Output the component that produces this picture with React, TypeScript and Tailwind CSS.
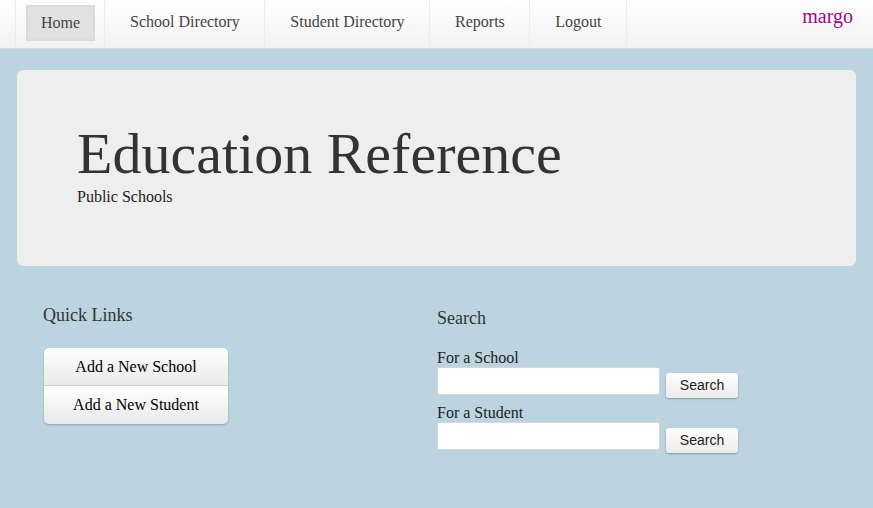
export default function App() {
  const nav = ["Home", "School Directory", "Student Directory", "Reports", "Logout"];
  return (
    <div className="min-h-[508px] bg-[#bbd4df] font-['Liberation_Serif',serif] text-[#333]">
      <div className="flex h-[49px] items-start justify-between border-b border-[#d6d6d6] bg-gradient-to-b from-white to-[#f2f2f2] pl-[15px] pr-[20px]">
        <ul className="flex h-[48px] border-l border-[#ececec]">
          {nav.map((item, i) => (
            <li key={item} className="flex h-[48px] border-r border-[#ececec]">
              {i === 0 ? (
                <a className="my-[5px] ml-[10px] mr-[9px] flex h-[36px] items-center bg-[#e1e1e1] px-[15px] text-[16px] text-[#444] shadow-[inset_0_0_4px_rgba(0,0,0,0.08)]">
                  {item}
                </a>
              ) : (
                <a className="flex h-[44px] items-center pl-[25px] pr-[24.5px] text-[16px] text-[#444]">{item}</a>
              )}
            </li>
          ))}
        </ul>
        <span className="pt-[1px] text-[20px] text-[#a3058f]">margo</span>
      </div>

      <div className="px-[17px] pt-[21px]">
        <div className="flex h-[196px] flex-col rounded-[6px] bg-[#eeeeee] px-[60px] pt-[50px]">
          <h1 className="text-[58px] leading-[68px] text-[#333]">Education Reference</h1>
          <p className="text-[16px] leading-[18px] text-[#222]">Public Schools</p>
        </div>
      </div>

      <div className="flex pt-[39px]">
        <div className="w-[420px] pl-[43px]">
          <h2 className="text-[18px] leading-[20px] text-[#333]">Quick Links</h2>
          <div className="ml-[1px] mt-[23px] flex w-[184px] flex-col rounded-[5px] shadow-[0_1px_2px_rgba(0,0,0,0.25)]">
            <button className="h-[38px] rounded-t-[5px] border-b border-[#cfcfcf] bg-gradient-to-b from-white to-[#e9e9e9] text-[16px] text-black">
              Add a New School
            </button>
            <button className="h-[38px] rounded-b-[5px] bg-gradient-to-b from-white to-[#e9e9e9] text-[16px] text-black">
              Add a New Student
            </button>
          </div>
        </div>
        <div className="pl-[17px] pt-[3px]">
          <h2 className="text-[18px] leading-[20px] text-[#333]">Search</h2>
          <div className="mt-[21px] flex flex-col">
            <label className="text-[16px] leading-[18px] text-[#222]">For a School</label>
            <div className="flex items-end gap-[6px]">
              <input className="h-[28px] w-[223px] rounded-[2px] border border-[#d6d6d6] bg-white" />
              <button className="mb-[-3px] h-[25px] w-[72px] rounded-[3px] bg-gradient-to-b from-white to-[#ebebeb] font-['Liberation_Sans',sans-serif] text-[14px] text-[#222] shadow-[0_1px_2px_rgba(0,0,0,0.3)]">
                Search
              </button>
            </div>
            <label className="mt-[9px] text-[16px] leading-[18px] text-[#222]">For a Student</label>
            <div className="flex items-end gap-[6px]">
              <input className="h-[28px] w-[223px] rounded-[2px] border border-[#d6d6d6] bg-white" />
              <button className="mb-[-3px] h-[25px] w-[72px] rounded-[3px] bg-gradient-to-b from-white to-[#ebebeb] font-['Liberation_Sans',sans-serif] text-[14px] text-[#222] shadow-[0_1px_2px_rgba(0,0,0,0.3)]">
                Search
              </button>
            </div>
          </div>
        </div>
      </div>
    </div>
  );
}
